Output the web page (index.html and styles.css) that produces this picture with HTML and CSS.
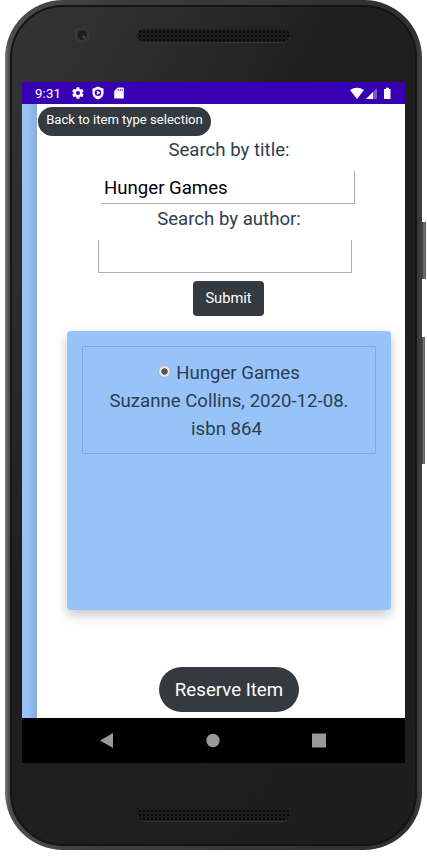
FILE: index.html
```html
<!DOCTYPE html>
<html lang="en">
<head>
<meta charset="utf-8">
<title>Reserve item</title>
<link rel="stylesheet" href="styles.css">
</head>
<body>
<div class="phone">
  <span class="side-key power"></span>
  <span class="side-key volume"></span>
  <div class="bezel">
    <header class="forehead">
      <svg class="camera" width="18" height="18" viewBox="0 0 18 18"><circle cx="9" cy="9" r="8" fill="#373737"/><circle cx="9" cy="9" r="4.8" fill="#1e1d20"/><circle cx="11" cy="11" r="1.6" fill="#59404d"/></svg>
      <div class="speaker"></div>
    </header>
    <div class="screen">
      <div class="status">
        <span class="clock">9:31</span>
        <svg class="gear" width="14" height="14" viewBox="0 0 24 24"><path fill="#fff" fill-rule="evenodd" d="M19.4 13a7.500 7.500 0 0 0 0-2l2.100-1.600a.5.5 0 0 0 .1-.6l-2-3.500a.5.5 0 0 0-.6-.2l-2.500 1a7.700 7.700 0 0 0-1.700-1L14.400 2.400a.5.5 0 0 0-.5-.4h-4a.5.5 0 0 0-.5.4L9 5.100a7.700 7.700 0 0 0-1.700 1l-2.500-1a.5.5 0 0 0-.6.2l-2 3.500a.5.5 0 0 0 .1.600L4.400 11a7.500 7.500 0 0 0 0 2l-2.100 1.600a.5.5 0 0 0-.1.600l2 3.500c.1.200.4.300.6.200l2.500-1a7.700 7.700 0 0 0 1.700 1l.4 2.700c0 .2.200.4.500.4h4c.3 0 .5-.2.500-.4l.4-2.700a7.700 7.700 0 0 0 1.700-1l2.500 1c.2.100.5 0 .6-.2l2-3.500a.5.5 0 0 0-.1-.6zM12 15.500a3.500 3.500 0 1 1 0-7 3.500 3.500 0 0 1 0 7z"/></svg>
        <svg class="shield" width="14" height="14" viewBox="0 0 24 24"><path fill="#fff" d="M12 1 21.500 4.500V12c0 5-4 9.500-9.500 11-5.500-1.500-9.500-6-9.500-11V4.500z"/><circle cx="12" cy="11.500" r="5.500" fill="#3700b3"/><path fill="#fff" d="M10 7.500 16.500 11.500l-6.500 4z"/></svg>
        <svg class="sd" width="10" height="12" viewBox="0 0 10 12"><path fill="#fff" d="M3.800.4H9q.8 0 .8.800v9.600q0 .8-.8.800H1q-.8 0-.8-.8V4z"/><path stroke="#3700b3" d="M4.300 2v2M6.300 2v2M8.200 2v2" stroke-width=".8"/></svg>
        <span class="spacer"></span>
        <svg width="43" height="13" viewBox="0 0 43 13"><path fill="#fff" d="M1 3Q8 -1.600 15 3L8 12z"/><path fill="#7e57cd" d="M28 1v11H17z"/><path fill="#fff" d="M24 5v7h-7z"/><path fill="#fff" d="M37 .8h3V2h1.500v10h-6.500V2h2z"/></svg>
      </div>
      <div class="page">
        <aside class="rail"></aside>
        <main class="content">
          <button class="btn back">Back to item type selection</button>
          <form class="search">
            <label class="label">Search by title:</label>
            <div class="field title-field">Hunger Games</div>
            <label class="label author-label">Search by author:</label>
            <div class="field author-field"></div>
            <button class="btn submit" type="button">Submit</button>
          </form>
          <section class="card">
            <div class="result">
              <div class="line"><span class="radio"></span>Hunger Games</div>
              <div class="line">Suzanne Collins, 2020-12-08.</div>
              <div class="line isbn">isbn 864</div>
            </div>
          </section>
          <button class="btn reserve">Reserve Item</button>
        </main>
      </div>
      <nav class="nav">
        <svg width="383" height="45" viewBox="0 0 383 45"><path fill="#999" d="M78 22.500 91 15v15z"/><circle cx="191" cy="22.500" r="6.700" fill="#999"/><rect x="290" y="15.500" width="14" height="14" rx=".7" fill="#999"/></svg>
      </nav>
    </div>
    <footer class="chin"><div class="speaker"></div></footer>
  </div>
</div>
</body>
</html>
```
FILE: styles.css
```css
* { box-sizing: border-box; }
body {
  margin: 0;
  background: #fff;
  font-family: Roboto, sans-serif;
  height: 863px;
  overflow: hidden;
}
.phone {
  position: relative;
  width: 417px;
  height: 850px;
  margin-left: 5px;
  padding: 5px 5px 4px;
  border-radius: 58px;
  background: linear-gradient(90deg, #777 0, #4e4e50 4px, #3c3c3c 25%, #303030 98%, #404040 100%);
}
.bezel {
  height: 841px;
  padding: 0 10px;
  border: 2px solid #141414;
  border-radius: 53px;
  background: linear-gradient(120deg, #343434 0, #2e2e2e 15%, #1f1f1f 38%, #1d1d1d 100%);
}
.side-key {
  position: absolute;
  left: 417px;
  background: linear-gradient(90deg, #333 0, #777 50%, #555 100%);
}
.power { top: 222px; width: 4px; height: 57px; }
.volume { top: 337px; width: 3px; height: 127px; }
.forehead {
  height: 75px;
  display: flex;
  align-items: flex-start;
  padding: 19px 0 0 51px;
}
.camera { display: block; }
.speaker {
  width: 153px;
  height: 13px;
  border-radius: 7px;
  background: radial-gradient(circle, #080808 1px, transparent 1.300px) 1px 1px / 4px 4px, #1c1c1c;
  box-shadow: 0 1px 0 #333;
}
.forehead .speaker { margin: 3px 0 0 46px; }
.chin { display: flex; padding: 45px 0 0 115px; }
.screen { width: 383px; height: 681px; background: #fff; }
.status {
  height: 22px;
  display: flex;
  align-items: center;
  padding: 0 13px;
  background: #3700b3;
  color: #fff;
  font-size: 13.300px;
}
.clock { width: 36px; letter-spacing: .1px; padding-top: 1px; }
.gear { margin-right: 6px; }
.shield { margin-right: 9px; }
.spacer { flex: 1; }
.page { height: 614px; display: flex; }
.rail { width: 15px; background: linear-gradient(90deg, #98c3f8 0, #98c3f8 35%, #87addc 100%); }
.content {
  width: 368px;
  display: flex;
  flex-direction: column;
  padding: 3px 14px 0 30px;
  color: #2c3e50;
  font-size: 18.620px;
  line-height: 28px;
}
.btn {
  border: 0;
  padding: 0;
  flex: none;
  background: #343a40;
  color: #fff;
  font-family: inherit;
}
.back {
  width: 173px;
  height: 28.500px;
  margin-left: -29px;
  padding-bottom: 3px;
  border-radius: 15px;
  font-size: 13.070px;
}
.search { display: flex; flex-direction: column; align-items: center; }
.label { height: 28px; }
.author-label { padding-top: 1px; }
.field {
  width: 254px;
  height: 33px;
  border: 1px solid #adadad;
  border-top: 0;
  border-left-color: transparent;
  padding: 3px 2px;
  color: #000;
}
.title-field { margin: 7.500px 2px 0 0; }
.author-field { height: 33px; margin: 8px 9px 0 0; border-left-color: #adadad; }
.submit { width: 71px; height: 35px; margin: 8px 1px 0 0; padding-bottom: 1px; border-radius: 4px; font-size: 14.670px; }
.card {
  width: 324px;
  height: 279px;
  flex: none;
  margin-top: 15px;
  padding: 15px;
  border-radius: 4px;
  background: #98c3f8;
  box-shadow: 0 5px 12px rgba(0, 0, 0, .22);
}
.result {
  height: 108px;
  padding: 12px 0 8px;
  border: 1px solid #82aadc;
  text-align: center;
}
.line { display: flex; justify-content: center; align-items: center; height: 28px; }
.isbn { padding-right: 5px; }
.radio {
  width: 13px;
  height: 13px;
  margin: -4px 5px 0 0;
  border-radius: 50%;
  border: 1px solid #b0b0b0;
  background: radial-gradient(circle, #555 0 2.800px, #e5e5e5 3.600px);
}
.reserve {
  width: 140px;
  height: 45px;
  margin: 57px auto 0;
  border-radius: 23px;
  font-size: 18.670px;
}
.nav { height: 45px; background: #000; }
.nav svg { display: block; }
```
